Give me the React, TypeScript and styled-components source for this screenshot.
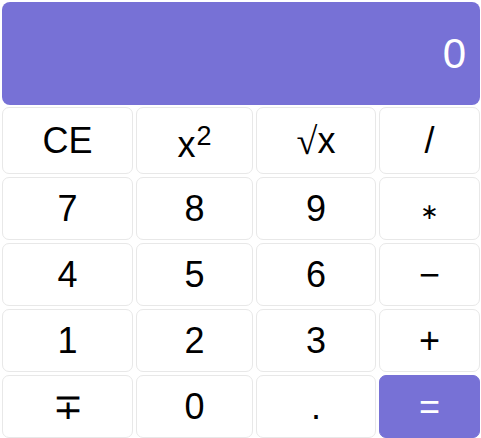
import { createGlobalStyle } from 'styled-components';
import styled from 'styled-components';

const GlobalStyle = createGlobalStyle`
  html, body {
    margin: 0;
    padding: 0;
    background: #ffffff;
    font-family: 'Liberation Sans', Arial, sans-serif;
  }
`;

const Calculator = styled.div`
  width: 478px;
  padding: 2px 1px 0 2px;
  display: flex;
  flex-direction: column;
  gap: 2px;
`;

const Display = styled.div`
  height: 103px;
  background: #7771d6;
  border-radius: 8px;
  color: #ffffff;
  font-size: 42px;
  display: flex;
  align-items: center;
  justify-content: flex-end;
  padding-right: 14px;
  box-sizing: border-box;
`;

const Keys = styled.div`
  display: grid;
  grid-template-columns: 131px 117px 120px 1fr;
  grid-template-rows: 67px repeat(4, 63px);
  gap: 3px;
`;

const Key = styled.button<{ $accent?: boolean }>`
  border: 1px solid ${p => (p.$accent ? '#7771d6' : '#e8e8e8')};
  border-radius: 7px;
  background: ${p => (p.$accent ? '#7771d6' : '#ffffff')};
  color: ${p => (p.$accent ? '#ffffff' : '#000000')};
  font-family: 'Liberation Sans', Arial, sans-serif;
  font-size: 36px;
  line-height: 1;
  padding: 0;
  display: flex;
  align-items: center;
  justify-content: center;
  cursor: pointer;
`;

const Power = styled.span`
  display: inline-block;
  font-size: 27px;
  line-height: 1;
  margin-left: 1px;
  transform: translateY(-12px);
`;

const Square = styled.span`
  position: relative;
  top: 4px;
`;

const Root = styled.span`
  font-family: 'Liberation Serif', 'Times New Roman', serif;
  font-size: 38px;
`;

const Star = styled.span`
  font-family: 'DejaVu Sans', sans-serif;
  font-size: 22px;
  position: relative;
  top: 3px;
`;

const keys: { label: React.ReactNode; accent?: boolean }[] = [
  { label: 'CE' },
  { label: <Square>x<Power>2</Power></Square> },
  { label: <><Root>√</Root>x</> },
  { label: '/' },
  { label: '7' },
  { label: '8' },
  { label: '9' },
  { label: <Star>∗</Star> },
  { label: '4' },
  { label: '5' },
  { label: '6' },
  { label: '−' },
  { label: '1' },
  { label: '2' },
  { label: '3' },
  { label: '+' },
  { label: '∓' },
  { label: '0' },
  { label: '.' },
  { label: '=', accent: true },
];

const App = (): JSX.Element => {
  return (
    <>
      <GlobalStyle />
      <Calculator>
        <Display>0</Display>
        <Keys>
          {keys.map((k, i) => (
            <Key key={i} type="button" $accent={k.accent}>
              {k.label}
            </Key>
          ))}
        </Keys>
      </Calculator>
    </>
  );
};

export default App;
